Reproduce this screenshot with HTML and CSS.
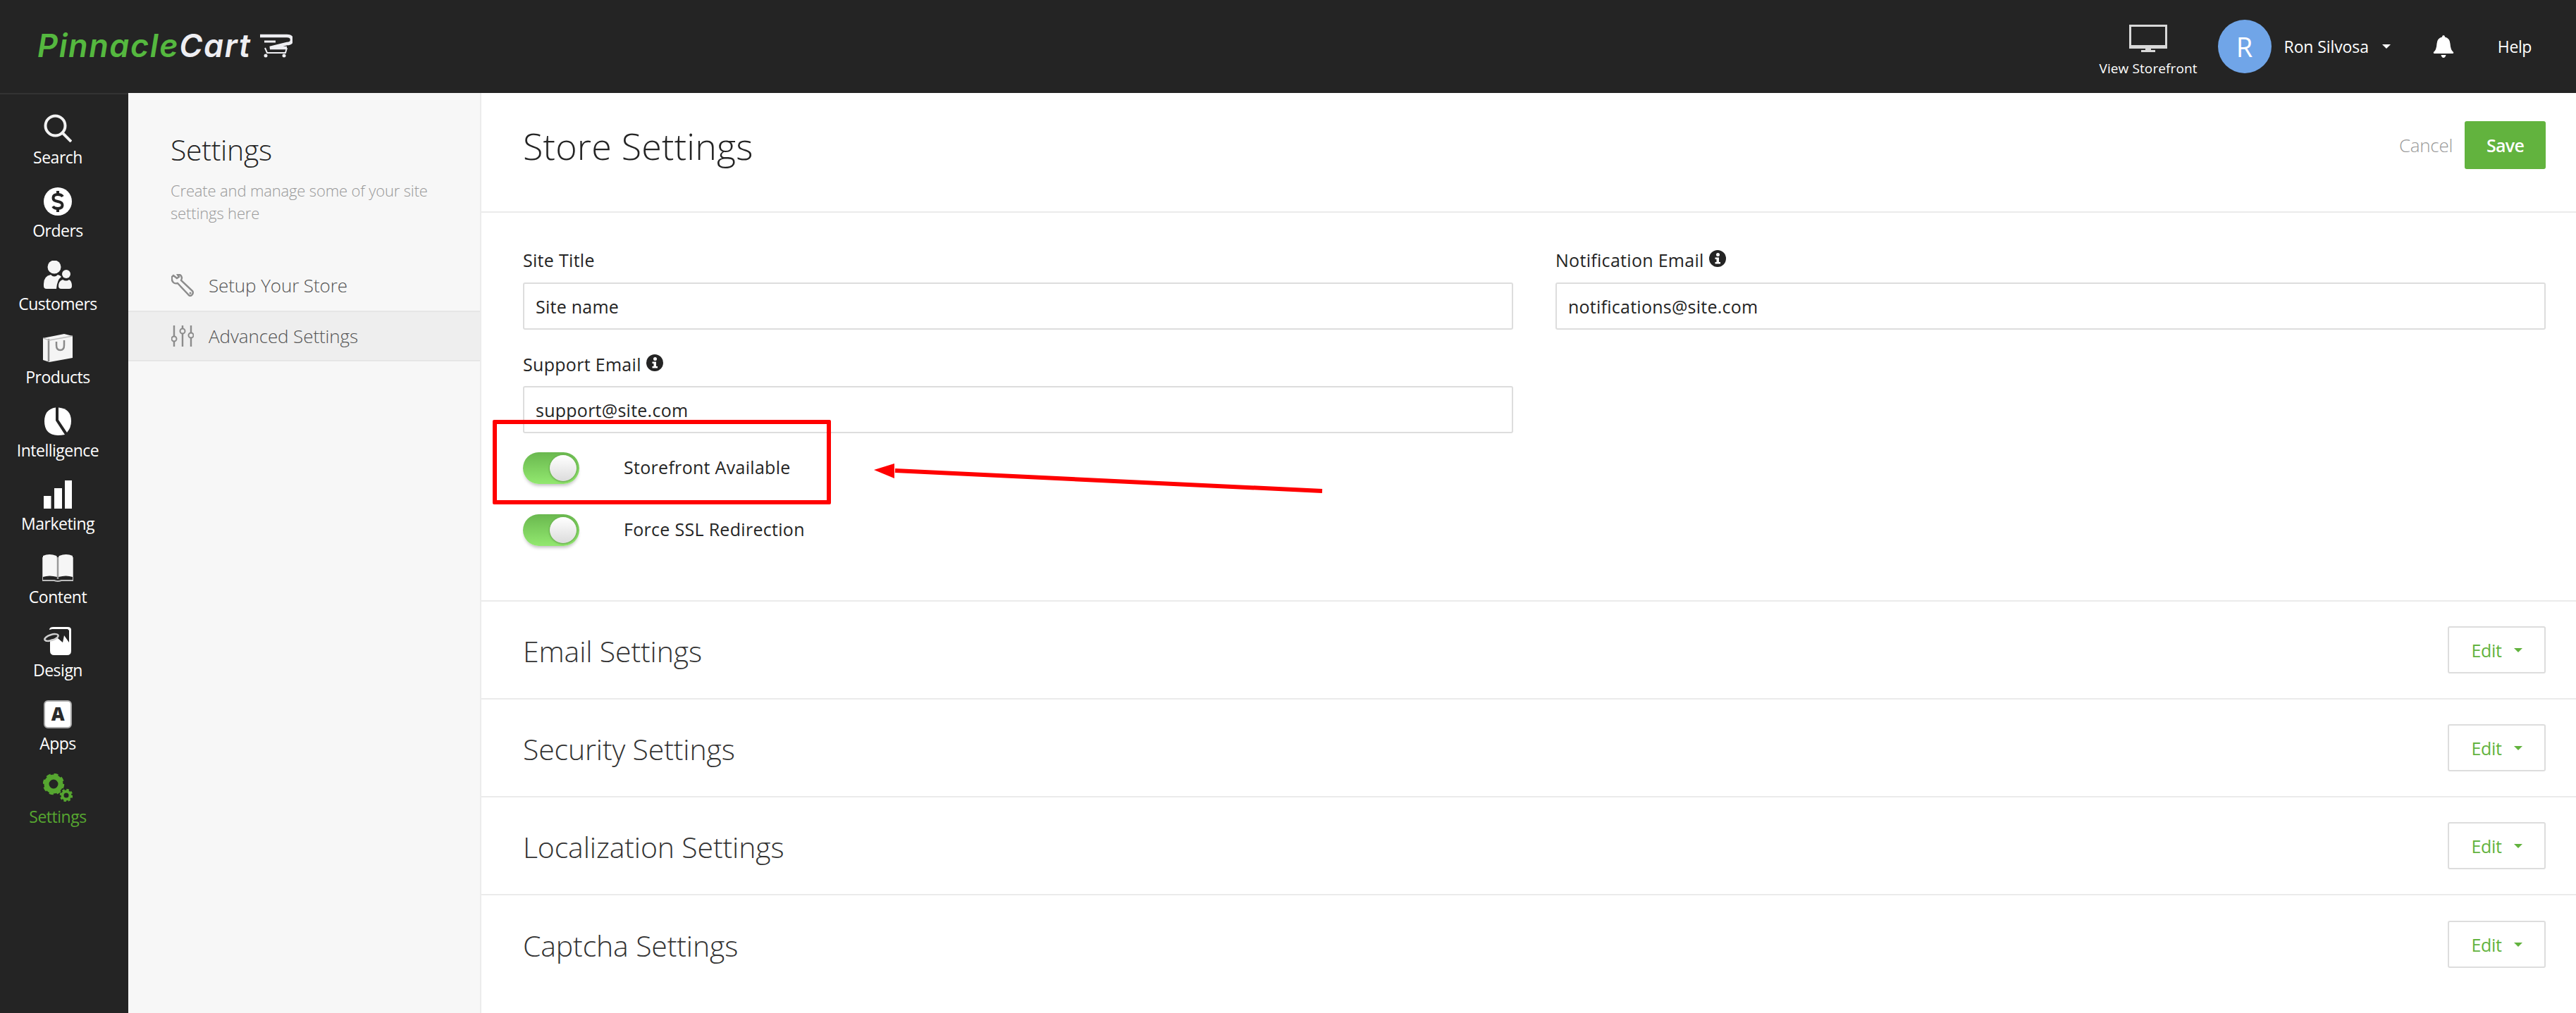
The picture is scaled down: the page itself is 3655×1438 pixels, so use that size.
FILE: index.html
```html
<!DOCTYPE html>
<html lang="en">
<head>
<meta charset="utf-8">
<title>Store Settings</title>
<link rel="stylesheet" href="styles.css">
</head>
<body>
<div class="page">
  <header class="topbar">
    <a class="logo"><span class="logo-text"><span class="logo-green">Pinnacle</span><span class="logo-white">Cart</span></span>
      <svg class="logo-cart" viewBox="0 0 46 34" width="46" height="34"><path d="M0 3H38Q45 3 45 8.500Q45 14 38 14L14 20H38" fill="none" stroke="#eeeef2" stroke-width="4.500"/><path d="M6 11H22" stroke="#eeeef2" stroke-width="3"/><path d="M7 20L10 27H36L38 20" fill="none" stroke="#eeeef2" stroke-width="2"/><circle cx="8" cy="31" r="2.500" fill="#eeeef2"/><circle cx="34" cy="31" r="2.500" fill="#eeeef2"/></svg>
    </a>
    <div class="top-actions">
      <a class="storefront">
        <svg viewBox="0 0 54 40" width="54" height="40"><rect x="1.500" y="1.500" width="51" height="31" fill="none" stroke="#d8d8d8" stroke-width="3"/><rect x="1" y="29" width="52" height="4" fill="#d8d8d8"/><path d="M23 33H31V36H37V39H17V36H23Z" fill="#d8d8d8"/></svg>
        <span>View Storefront</span>
      </a>
      <div class="avatar">R</div>
      <span class="user-name">Ron Silvosa</span>
      <span class="caret caret-white"></span>
      <svg class="bell" viewBox="0 0 30 34" width="30" height="34"><path d="M15 1Q17 1 17 3.500Q24 5 24.500 13Q25 22 29 25Q30 27 27 27H3Q0 27 1 25Q5 22 5.500 13Q6 5 13 3.500Q13 1 15 1Z" fill="#fff"/><path d="M11.500 29H18.500Q17.500 33 15 33Q12.500 33 11.500 29Z" fill="#fff"/></svg>
      <span class="help">Help</span>
    </div>
  </header>

  <div class="shell">
    <nav class="sidebar">
      <a class="nav-item">
        <svg class="nav-icon" viewBox="0 0 40 40"><circle cx="16.500" cy="16.500" r="14" fill="none" stroke="#f2f2f2" stroke-width="4"/><path d="M26 26L39 39" stroke="#f2f2f2" stroke-width="4"/></svg>
        <span>Search</span>
      </a>
      <a class="nav-item">
        <svg class="nav-icon" viewBox="0 0 40 40"><circle cx="20" cy="20" r="20" fill="#fff"/><path d="M27 13Q25 10 20 10Q13.500 10 13.500 15Q13.500 19 20 20Q26.500 21 26.500 25Q26.500 30 20 30Q15 30 13 27" fill="none" stroke="#242424" stroke-width="4"/><path d="M20 5V10M20 30V35" stroke="#242424" stroke-width="4"/></svg>
        <span>Orders</span>
      </a>
      <a class="nav-item">
        <svg class="nav-icon" viewBox="0 0 40 40"><ellipse cx="15" cy="9" rx="9.500" ry="9.500" fill="#f5f5f5"/><path d="M0 33Q0 22 10 20Q15 25 20 20Q24 21 25 23Q19 27 18 40H4Q0 40 0 36Z" fill="#f5f5f5"/><circle cx="32" cy="19" r="6" fill="#f5f5f5"/><path d="M21 36Q21 29 27 27Q32 30 36 27Q40 29 40 36Q40 40 36 40H25Q21 40 21 36Z" fill="#f5f5f5"/></svg>
        <span>Customers</span>
      </a>
      <a class="nav-item">
        <svg class="nav-icon nav-icon-wide" viewBox="0 0 42 40"><path d="M0 6L30 0L42 3V34L9 40L0 37Z" fill="#f4f4f4"/><path d="M8 7V39" stroke="#8a8a8a" stroke-width="2.500"/><path d="M0 6L9 9L42 3" fill="none" stroke="#bbb" stroke-width="1.500"/><path d="M19 11V16Q19 23 24.500 23Q30 23 30 16V9" fill="none" stroke="#8a8a8a" stroke-width="2.500"/></svg>
        <span>Products</span>
      </a>
      <a class="nav-item">
        <svg class="nav-icon" viewBox="0 0 40 40"><path d="M17 0.500V19L30 39Q25 40 20 40Q1 39 1 20Q1 3 17 0.500Z" fill="#fff"/><path d="M21 0.500Q39 2 39 20Q39 29 33 36L21 18Z" fill="#fff"/></svg>
        <span>Intelligence</span>
      </a>
      <a class="nav-item">
        <svg class="nav-icon" viewBox="0 0 40 40"><rect x="0" y="22" width="10.500" height="18" fill="#fff"/><rect x="15" y="11" width="11" height="29" fill="#fff"/><rect x="30" y="0" width="10" height="40" fill="#fff"/></svg>
        <span>Marketing</span>
      </a>
      <a class="nav-item">
        <svg class="nav-icon nav-icon-book" viewBox="0 0 44 40"><path d="M1 3Q10 -1 20 3Q21 4 21 6V33Q10 30 1 33Z" fill="#f6f6f6"/><path d="M43 3Q34 -1 24 3Q23 4 23 6V33Q34 30 43 33Z" fill="#f6f6f6"/><path d="M0 5V38H17Q22 40 27 38H44V5" fill="none" stroke="#bdbdbd" stroke-width="2"/><path d="M22 5V36" stroke="#999" stroke-width="2.500"/></svg>
        <span>Content</span>
      </a>
      <a class="nav-item">
        <svg class="nav-icon" viewBox="0 0 40 40"><path d="M8 4Q8 0 14 0H34Q39 0 39 4V34Q39 40 33 40H15Q9 40 9 34V18L20 16L27 22L29 12L36 22V5L34 3H12Z" fill="#fff"/><ellipse cx="11" cy="15" rx="10" ry="4" transform="rotate(-18 11 15)" fill="none" stroke="#cfcfcf" stroke-width="2.500"/></svg>
        <span>Design</span>
      </a>
      <a class="nav-item">
        <svg class="nav-icon" viewBox="0 0 40 40"><rect x="1" y="1" width="38" height="38" rx="5" fill="#fff" stroke="#a8a8a8" stroke-width="2"/><text class="apps-letter" x="20" y="29" text-anchor="middle">A</text></svg>
        <span>Apps</span>
      </a>
      <a class="nav-item nav-item-active">
        <svg class="nav-icon nav-icon-wide" viewBox="0 0 42 40"><circle cx="15" cy="15" r="10" fill="none" stroke="#56a630" stroke-width="7"/><circle cx="15" cy="15" r="13.500" fill="none" stroke="#56a630" stroke-width="3.500" stroke-dasharray="6 4.600"/><circle cx="33" cy="31" r="5.500" fill="none" stroke="#56a630" stroke-width="4"/><circle cx="33" cy="31" r="8" fill="none" stroke="#56a630" stroke-width="2.500" stroke-dasharray="3.500 2.800"/></svg>
        <span>Settings</span>
      </a>
    </nav>

    <aside class="panel">
      <h2 class="panel-title">Settings</h2>
      <p class="panel-desc">Create and manage some of your site settings here</p>
      <ul class="panel-menu">
        <li class="menu-item">
          <svg class="menu-icon" viewBox="0 0 32 32" width="32" height="32"><path d="M3 2L8 6L11 4L9 1Q14 0 15 5Q15 7 14 9L30 24Q32 27 29 30Q26 32 24 29L9 13Q5 14 3 12Q0 9 1 4Z" fill="none" stroke="#8c8c8c" stroke-width="2.400"/><circle cx="27" cy="27" r="1.500" fill="#8c8c8c"/></svg>
          <span>Setup Your Store</span>
        </li>
        <li class="menu-item menu-item-active">
          <svg class="menu-icon" viewBox="0 0 32 32" width="32" height="32"><path d="M4 1V31M16 1V31M28 1V31" stroke="#8c8c8c" stroke-width="2.400"/><circle cx="4" cy="20" r="3.500" fill="#eee" stroke="#8c8c8c" stroke-width="2"/><circle cx="16" cy="9" r="3.500" fill="#eee" stroke="#8c8c8c" stroke-width="2"/><circle cx="28" cy="15" r="3.500" fill="#eee" stroke="#8c8c8c" stroke-width="2"/></svg>
          <span>Advanced Settings</span>
        </li>
      </ul>
    </aside>

    <main class="main">
      <div class="main-head">
        <h1 class="main-title">Store Settings</h1>
        <div class="main-actions">
          <a class="cancel">Cancel</a>
          <button class="save" type="button">Save</button>
        </div>
      </div>

      <section class="form-section">
        <div class="form-grid">
          <div class="field">
            <label class="field-label">Site Title</label>
            <input class="field-input" type="text" value="Site name">
          </div>
          <div class="field">
            <label class="field-label">Notification Email <svg class="info" viewBox="0 0 24 24" width="24" height="24"><circle cx="12" cy="12" r="12" fill="#242424"/><circle cx="12.500" cy="6.500" r="2.500" fill="#fff"/><path d="M8.500 10.500H14V17H16V19.500H8.500V17H10.500V13H8.500Z" fill="#fff"/></svg></label>
            <input class="field-input" type="text" value="notifications@site.com">
          </div>
          <div class="field">
            <label class="field-label">Support Email <svg class="info" viewBox="0 0 24 24" width="24" height="24"><circle cx="12" cy="12" r="12" fill="#242424"/><circle cx="12.500" cy="6.500" r="2.500" fill="#fff"/><path d="M8.500 10.500H14V17H16V19.500H8.500V17H10.500V13H8.500Z" fill="#fff"/></svg></label>
            <input class="field-input" type="text" value="support@site.com">
          </div>
        </div>
        <div class="toggles">
          <div class="toggle-row"><span class="toggle"><span class="knob"></span></span><span class="toggle-label">Storefront Available</span></div>
          <div class="toggle-row"><span class="toggle"><span class="knob"></span></span><span class="toggle-label">Force SSL Redirection</span></div>
        </div>
      </section>

      <div class="row"><h3 class="row-title">Email Settings</h3><button class="edit" type="button">Edit<span class="caret caret-green"></span></button></div>
      <div class="row"><h3 class="row-title">Security Settings</h3><button class="edit" type="button">Edit<span class="caret caret-green"></span></button></div>
      <div class="row"><h3 class="row-title">Localization Settings</h3><button class="edit" type="button">Edit<span class="caret caret-green"></span></button></div>
      <div class="row row-last"><h3 class="row-title">Captcha Settings</h3><button class="edit" type="button">Edit<span class="caret caret-green"></span></button></div>
    </main>
  </div>

  <div class="callout-box"></div>
  <svg class="callout-arrow" viewBox="0 0 640 40" width="640" height="40"><path d="M30 8L636 37" stroke="#ff0000" stroke-width="6"/><path d="M0 7L29 -2V19Z" fill="#ff0000"/></svg>
</div>
</body>
</html>
```
FILE: styles.css
```css
* { box-sizing: border-box; }
html, body { margin: 0; padding: 0; }
body { font-family: "Open Sans", "Noto Sans", sans-serif; color: #242424; background: #fff; }
h1, h2, h3, p, ul { margin: 0; padding: 0; }
ul { list-style: none; }

.page { position: relative; width: 3655px; height: 1438px; overflow: hidden; display: flex; flex-direction: column; }

/* top bar */
.topbar { height: 132px; flex: none; background: #242424; display: flex; align-items: center; justify-content: space-between; padding: 0 63px 0 53px; }
.logo { display: flex; align-items: center; gap: 13px; margin-top: -3px; }
.logo-text { font-family: "Inter", sans-serif; font-style: italic; font-weight: 600; font-size: 45px; letter-spacing: 1.600px; line-height: 50px; }
.logo-green { color: #55b83f; }
.logo-white { color: #eeeef2; }
.top-actions { display: flex; align-items: center; color: #fff; }
.storefront { display: flex; flex-direction: column; align-items: center; gap: 9px; font-size: 19px; letter-spacing: 0.100px; width: 139px; white-space: nowrap; margin-top: 12px; margin-right: 29px; }
.storefront svg { display: block; }
.avatar { width: 76px; height: 76px; border-radius: 50%; background: #70a5e8; color: #fff; font-size: 38px; display: flex; align-items: center; justify-content: center; margin-right: 18px; }
.user-name { font-size: 23px; letter-spacing: -0.100px; margin-right: 19px; white-space: nowrap; }
.caret { display: inline-block; width: 0; height: 0; border-style: solid; border-width: 6px 6px 0 6px; }
.caret-white { border-color: #fff transparent transparent; margin-right: 60px; }
.caret-green { border-color: #62b33e transparent transparent; margin-left: 17px; }
.bell { margin-right: 62px; }
.help { font-size: 23px; letter-spacing: -0.400px; }

/* layout */
.shell { flex: 1; display: flex; min-height: 0; }

/* sidebar */
.sidebar { width: 182px; flex: none; background: #242424; border-top: 2px solid #333; padding: 28px 18px 0 0; display: flex; flex-direction: column; }
.nav-item { height: 104px; flex: none; display: flex; flex-direction: column; align-items: center; color: #fff; font-size: 23px; line-height: 32px; letter-spacing: -0.500px; }
.nav-item-active { color: #56a630; }
.nav-icon { width: 40px; height: 40px; display: block; margin-bottom: 5px; flex: none; }
.nav-icon-wide { width: 42px; }
.nav-icon-book { width: 44px; }
.apps-letter { font-family: "Open Sans", sans-serif; font-weight: 800; font-size: 26px; fill: #2a2a2a; }

/* settings panel */
.panel { width: 501px; flex: none; background: #f7f7f7; border-right: 2px solid #ececec; padding-top: 55px; }
.panel-title { font-size: 41px; font-weight: 300; line-height: 50px; padding-left: 60px; color: #242424; letter-spacing: -0.300px; }
.panel-desc { font-size: 22px; font-weight: 300; line-height: 32px; color: #999; padding: 17px 30px 0 60px; letter-spacing: -0.150px; }
.panel-menu { margin-top: 51px; }
.menu-item { height: 72px; display: flex; align-items: center; gap: 21px; padding-left: 61px; font-size: 26px; font-weight: 300; color: #555; letter-spacing: -0.100px; }
.menu-item-active { background: #eee; border-top: 2px solid #e6e6e6; border-bottom: 2px solid #e6e6e6; }

/* main */
.main { flex: 1; min-width: 0; background: #fff; }
.main-head { height: 170px; border-bottom: 2px solid #ebebeb; display: flex; align-items: center; justify-content: space-between; padding: 0 43px 0 59px; }
.main-title { font-size: 52px; font-weight: 300; color: #242424; letter-spacing: 0.200px; margin-top: -20px; }
.main-actions { display: flex; align-items: center; gap: 17px; margin-top: -20px; }
.cancel { font-size: 26px; font-weight: 300; color: #999; letter-spacing: -0.300px; }
.save { width: 115px; height: 68px; border: 0; border-radius: 3px; background: #62b33e; color: #fff; font: 600 25px "Open Sans", sans-serif; letter-spacing: -0.700px; padding: 0; }

.form-section { height: 552px; border-bottom: 2px solid #ebebeb; padding: 51px 43px 0 59px; }
.form-grid { display: grid; grid-template-columns: 1405px 1405px; column-gap: 60px; row-gap: 33px; }
.field-label { display: flex; align-items: center; gap: 7px; height: 32px; font-size: 25px; letter-spacing: 0.300px; margin-bottom: 16px; color: #242424; }
.info { flex: none; margin-top: -4px; }
.field-input { display: block; width: 100%; height: 67px; border: 2px solid #ddd; border-radius: 3px; padding: 0 16px; font: 400 25px "Open Sans", sans-serif; letter-spacing: 0.250px; color: #242424; background: #fff; }
.field:nth-child(3) .field-label { margin-bottom: 15px; }

.toggles { display: flex; flex-direction: column; gap: 43px; margin-top: 27px; }
.toggle-row { display: flex; align-items: center; height: 45px; gap: 63px; }
.toggle { position: relative; width: 80px; height: 45px; border-radius: 23px; background: linear-gradient(#6ab84f, #92e86f); box-shadow: 0 4px 5px -2px rgba(0,0,0,.28); flex: none; }
.knob { position: absolute; right: 4px; top: 4px; width: 38px; height: 37px; border-radius: 50%; background: linear-gradient(#fff, #dcdcdc); box-shadow: 0 1px 3px rgba(0,0,0,.35); }
.toggle-label { font-size: 25px; letter-spacing: 0.300px; color: #242424; margin-top: -3px; }

.row { height: 139px; border-bottom: 2px solid #ebebeb; display: flex; align-items: center; justify-content: space-between; padding: 0 43px 0 59px; }
.row-last { border-bottom: 0; }
.row-title { font-size: 41px; font-weight: 300; color: #333; letter-spacing: -0.150px; margin-top: 3px; }
.edit { width: 139px; height: 67px; border: 2px solid #ddd; border-radius: 3px; background: #fff; color: #62b33e; font: 400 25px "Open Sans", sans-serif; letter-spacing: -0.300px; display: flex; align-items: center; justify-content: center; padding: 0; }

/* annotation */
.callout-box { position: absolute; left: 699px; top: 596px; width: 480px; height: 120px; border: 6px solid #ff0000; border-radius: 2px; }
.callout-arrow { position: absolute; left: 1240px; top: 660px; overflow: visible; }
```
